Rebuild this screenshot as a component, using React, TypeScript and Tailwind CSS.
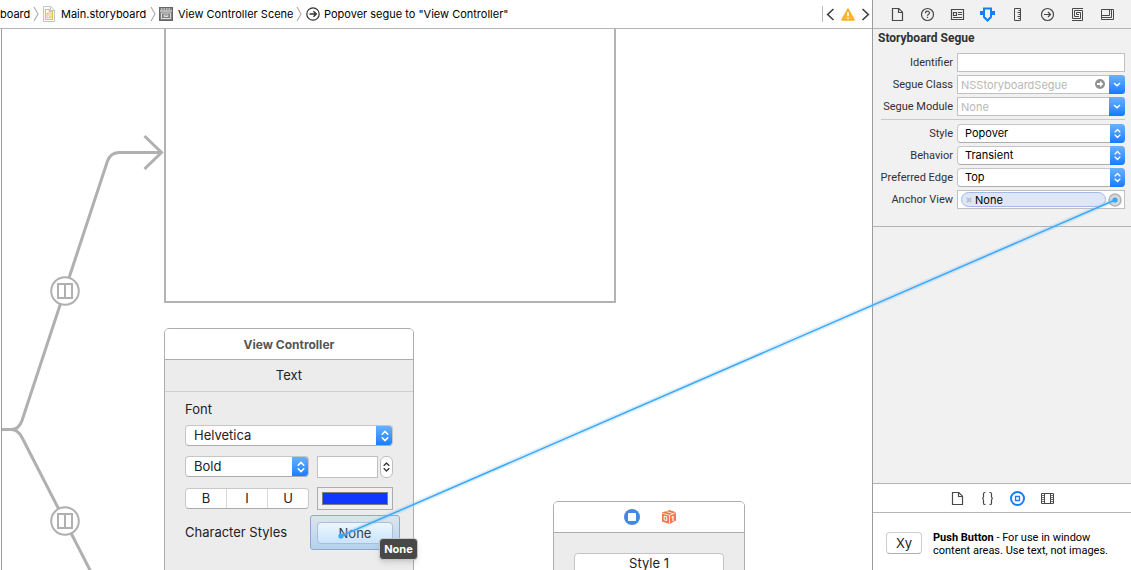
import React from "react";

function Chevrons({ className = "h-3 w-2" }: { className?: string }) {
  return (
    <svg viewBox="0 0 8 12" className={className} fill="none" stroke="currentColor" strokeWidth="1.5" strokeLinecap="round" strokeLinejoin="round">
      <path d="M1.2 4.2 4 1.4l2.8 2.8M1.2 7.8 4 10.6l2.8-2.8" />
    </svg>
  );
}

function CrumbArrow() {
  return (
    <svg viewBox="0 0 6 16" className="h-4 w-[6px] shrink-0" fill="none" stroke="#b0b0b0" strokeWidth="1.2">
      <path d="M1 1l4 7-4 7" />
    </svg>
  );
}

function SegueIcon() {
  return (
    <svg viewBox="0 0 14 14" className="size-[14px] shrink-0" fill="none" stroke="#333" strokeWidth="1.2">
      <circle cx="7" cy="7" r="6.2" />
      <path d="M3.5 7h6.6M7.4 4.2 10.3 7 7.4 9.8" strokeWidth="1.4" />
    </svg>
  );
}

function JumpBar() {
  return (
    <nav aria-label="Jump bar" className="flex h-[29px] shrink-0 items-center border-b border-[#b4b4b4] bg-white text-[11px] whitespace-nowrap text-black">
      <a href="#project" className="w-[33px]">board</a>
      <CrumbArrow />
      <a href="#storyboard" className="ml-1 flex w-[107px] items-center gap-[6px]">
        <svg viewBox="0 0 12 16" className="h-4 w-3 shrink-0" fill="none">
          <path d="M.5.5h7.3l3.7 3.7v11.3H.5z" fill="#fff" stroke="#c4c4c4" />
          <path d="M7.5.8v3.7h3.7" stroke="#c4c4c4" />
          <path d="M2.500 3.500h3.800v2.200h3.200v7.800h-7z" stroke="#efbd56" strokeWidth="1.2" />
          <path d="M4 7.200h4v4.600H4zM4.200 7.400l3.600 4.200" stroke="#efbd56" />
        </svg>
        Main.storyboard
      </a>
      <CrumbArrow />
      <a href="#scene" className="ml-[3px] flex w-[137px] items-center gap-[5px]">
        <svg viewBox="0 0 14 14" className="size-[14px] shrink-0" fill="none">
          <rect x=".5" y=".5" width="13" height="13" fill="#808080" stroke="#666" />
          <path d="M1 4h12M2 2h1.500M4.500 2H6M7 2h1.500M9.500 2H11" stroke="#fff" strokeWidth=".9" />
          <path d="M2.500 6h9v5.500h-9zM5 8h4v1.500H5z" stroke="#e4e4e4" strokeWidth=".9" />
        </svg>
        View Controller Scene
      </a>
      <CrumbArrow />
      <a href="#segue" className="ml-1 flex items-center gap-1">
        <SegueIcon />
        Popover segue to "View Controller"
      </a>
      <div className="ml-auto flex items-center border-l border-[#b8b8b8] pl-[3px] text-[#444]">
        <button aria-label="Previous issue" className="flex h-4 w-3 items-center">
          <svg viewBox="0 0 9 13" className="h-[13px] w-[9px]" fill="none" stroke="currentColor" strokeWidth="1.7"><path d="M7.500 1 1.700 6.500 7.500 12" /></svg>
        </button>
        <button aria-label="Warnings" className="ml-[3px] flex items-center">
          <svg viewBox="0 0 14 13" className="h-[13px] w-[14px]">
            <path d="M7 1.200 13 12H1z" fill="#fdbb2d" stroke="#f9b124" strokeWidth="1.6" strokeLinejoin="round" />
            <path d="M7 4v4M7 9.400V11" stroke="#fff" strokeWidth="1.500" />
          </svg>
        </button>
        <button aria-label="Next issue" className="mr-[2px] ml-[6px] flex h-4 items-center">
          <svg viewBox="0 0 9 13" className="h-[13px] w-[9px]" fill="none" stroke="currentColor" strokeWidth="1.7"><path d="M1.500 1 7.300 6.500 1.500 12" /></svg>
        </button>
      </div>
    </nav>
  );
}

function SegueBadge({ y }: { y: number }) {
  return (
    <g>
      <circle cx="65" cy={y} r="13.8" fill="#fff" stroke="#b0b0b0" strokeWidth="2" />
      <path d={`M58 ${y - 7}h14v14H58zM65 ${y - 7}v14`} fill="none" stroke="#b0b0b0" strokeWidth="2" />
    </g>
  );
}

function Connections() {
  return (
    <svg className="absolute top-0 left-0 h-[541px] w-[164px]" viewBox="0 0 164 541" fill="none" stroke="#b0b0b0" strokeWidth="3">
      <path d="M1.500 0v541" stroke="#9a9a9a" strokeWidth="1" />
      <path d="M2 400.500h9q8 0 11-9L107.500 132q3-8 11-8.500H161M144.500 107l17 16.500L144.500 140" />
      <path d="M11 400.500q7 0 11 8L91 543" />
      <SegueBadge y={262} />
      <SegueBadge y={492} />
    </svg>
  );
}

function CanvasSelect({ label, value, className }: { label: string; value: string; className: string }) {
  return (
    <div className={"relative flex h-[21px] overflow-hidden rounded-[4px] border border-[#c6c6c6] border-b-[#adadad] bg-white " + className}>
      <select aria-label={label} className="w-full appearance-none pl-2 text-[13px] leading-[19px] outline-none">
        <option>{value}</option>
      </select>
      <span className="pointer-events-none absolute -top-px -right-px -bottom-px flex w-[17px] items-center justify-center bg-linear-to-b from-[#69b1fa] to-[#0d7bff] text-white">
        <Chevrons />
      </span>
    </div>
  );
}

function TextController() {
  return (
    <section className="absolute top-[299px] left-[164px] h-[270px] w-[250px] rounded-t-[5px] border border-[#adadad] bg-[#ececec] text-[13px] text-[#222]">
      <h2 className="flex h-[31px] items-center justify-center rounded-t-[4px] border-b border-[#adadad] bg-white pt-px text-[12px] font-bold text-[#555]">View Controller</h2>
      <div className="flex h-8 items-center justify-center border-b border-[#cfcfcf]">Text</div>
      <div className="flex flex-col px-5 pt-2">
        <div className="h-[25px] leading-[18px]">Font</div>
        <CanvasSelect label="Font" value="Helvetica" className="w-[208px]" />
        <div className="mt-[9px] flex h-[23px] items-center gap-2">
          <CanvasSelect label="Weight" value="Bold" className="w-[124px]" />
          <div className="flex gap-[2px]">
            <input aria-label="Size" className="h-[22px] w-[61px] border border-[#c0c0c0] bg-white px-1 outline-none" />
            <button aria-label="Change size" className="flex h-[22px] w-[13px] items-center justify-center rounded-[6px] border border-[#bdbdbd] bg-white text-[#333]">
              <Chevrons className="h-[14px] w-[7px]" />
            </button>
          </div>
        </div>
        <div className="mt-[9px] flex h-[23px] items-center gap-2">
          <div className="flex h-[21px] w-[124px] divide-x divide-[#d8d8d8] rounded-[4px] border border-[#c9c9c9] border-b-[#adadad] bg-white leading-[19px]">
            <button className="flex-1">B</button>
            <button className="flex-1">I</button>
            <button className="flex-1">U</button>
          </div>
          <button aria-label="Text color" className="h-[23px] w-[76px] border border-[#adadad] bg-[#f0f0f0] p-1">
            <span className="block h-[13px] border border-[#7d8080] bg-[#0f37ff]" />
          </button>
        </div>
        <div className="mt-[5px] flex h-[35px] items-center justify-between">
          <span className="pt-px">Character Styles</span>
          <div className="-mr-[7px] flex h-[35px] w-[90px] items-center justify-center rounded-[3px] border border-[#8fa9ce] bg-linear-to-b from-[#dce5ee] to-[#b4d2ec]">
            <button className="h-[22px] w-[76px] rounded-[4px] border border-[#a9bfd3] bg-linear-to-b from-[#eef6fd] to-[#c9e4fb] leading-5 text-[#30404f]">None</button>
          </div>
        </div>
      </div>
    </section>
  );
}

function StyleController() {
  return (
    <section className="absolute top-[472px] left-[553px] h-[110px] w-[192px] rounded-t-[5px] border border-[#adadad] bg-[#ececec]">
      <div className="flex h-[31px] items-center justify-center gap-[21px] rounded-t-[4px] border-b border-[#adadad] bg-white pl-0.5">
        <svg viewBox="0 0 16 16" className="size-4"><circle cx="8" cy="8" r="8" fill="#4389e0" /><rect x="4" y="4" width="8" height="8" rx=".8" fill="#fff" /></svg>
        <svg viewBox="0 0 16 16" className="size-4">
          <path d="M8.500 1 15 3.200v8.300L8.500 15 1 12.500V3.600z" fill="#f2774c" />
          <path d="M1.200 4.200 8.500 6.300 14.800 3.600M8.500 6.300V14.600M5.500 2.600 12 4.600" fill="none" stroke="#fff" strokeWidth=".8" />
          <path d="M3.200 7.200v3.600l2.600.8V7.900zM3.200 9.200" fill="none" stroke="#fff" strokeWidth="1" />
          <path d="m10.600 8.400 1.400-.9v4.700" fill="none" stroke="#fff" strokeWidth="1.200" />
        </svg>
      </div>
      <div className="flex px-5 pt-5">
        <button className="h-[21px] w-full rounded-[4px] border border-[#c4c4c4] bg-white text-[13px] leading-[19px] text-[#222]">Style 1</button>
      </div>
    </section>
  );
}

function Glyph({ children }: { children: React.ReactNode }) {
  return <svg viewBox="0 0 17 17" className="size-[17px]" fill="none" stroke="currentColor" strokeWidth="1.200">{children}</svg>;
}

const docIcon = <Glyph><path d="M3.500 2.500h6.300l3.700 3.700v8.300h-10zM9.500 2.500v4h4" /></Glyph>;

const inspectorTabs: { name: string; icon: React.ReactNode; active?: boolean }[] = [
  { name: "File", icon: docIcon },
  { name: "Quick Help", icon: <Glyph><circle cx="8.500" cy="8.500" r="6" /><path d="M6.500 7.200c0-2.700 4-2.500 4-.3 0 1.300-2 1.400-2 2.800M8.500 10.700v1.400" /></Glyph> },
  { name: "Identity", icon: <Glyph><path d="M2.500 3.500h12v10h-12zM4.500 6.500h3v3h-3zM9 6.500h4M9 8.500h4M4 11.500h9" /></Glyph> },
  {
    name: "Attributes",
    active: true,
    icon: (
      <Glyph>
        <path d="M4 1.500h9v10L8.500 16 4 11.500zM1 5h15v4H1z" fill="currentColor" stroke="none" />
        <path d="M6 3.500h5v6.800l-2.500 2.700L6 10.300z" fill="#f1f1f1" stroke="none" />
      </Glyph>
    ),
  },
  { name: "Size", icon: <Glyph><path d="M5.500 2.500h6v12h-6zM11.500 4.500h-2M11.500 6.500h-3M11.500 8.500h-2M11.500 10.500h-3M11.500 12.500h-2" strokeWidth="1" /></Glyph> },
  { name: "Connections", icon: <Glyph><circle cx="8.500" cy="8.500" r="6" /><path d="M5 8.500h6.500M9 6l2.500 2.500L9 11" /></Glyph> },
  { name: "Bindings", icon: <Glyph><path d="M14 2.500H3.500v10h8v-6h-4v2H10M3 14.500h10.500v-10h-8v6H10" strokeWidth="1" /></Glyph> },
  { name: "View Effects", icon: <Glyph><path d="M2.500 3.500h12v10h-12zM2.500 9.500h8v-6M2.500 11.500h10v-8" strokeWidth="1" /></Glyph> },
];

const libraryTabs: { name: string; icon: React.ReactNode; active?: boolean }[] = [
  { name: "File Templates", icon: docIcon },
  { name: "Code Snippets", icon: <Glyph><path d="M6.500 2.500h-.7q-1.300 0-1.300 1.300v3q0 1.700-1.500 1.700 1.500 0 1.500 1.700v3q0 1.300 1.300 1.300h.7M10.500 2.500h.7q1.300 0 1.300 1.300v3q0 1.700 1.500 1.700-1.500 0-1.500 1.700v3q0 1.300-1.300 1.300h-.7" /></Glyph> },
  { name: "Objects", active: true, icon: <Glyph><circle cx="8.500" cy="8.500" r="6.500" strokeWidth="2" /><path d="M6.500 6.500h4v4h-4z" strokeWidth="1.300" /></Glyph> },
  { name: "Media", icon: <Glyph><path d="M2.500 3.500h12v10h-12zM5.500 3.500v10M11.500 3.500v10" strokeWidth="1" /><path d="M4 5v8M13 5v8" strokeDasharray="1 1" strokeWidth="1.500" /></Glyph> },
];

function Tabs({ tabs, label }: { tabs: typeof inspectorTabs; label: string }) {
  return (
    <div aria-label={label} className="flex h-[29px] items-center justify-center">
      {tabs.map((t) => (
        <button key={t.name} aria-label={t.name} className={t.active ? "w-[30px] pl-[7px] text-[#177efb]" : "w-[30px] pl-[7px] text-[#484848]"}>
          {t.icon}
        </button>
      ))}
    </div>
  );
}

function Row({ id, label, children }: { id: string; label: string; children: React.ReactNode }) {
  return (
    <div className="flex items-center gap-1">
      <label htmlFor={id} className="w-20 shrink-0 pt-px text-right font-['Roboto','Liberation_Sans',sans-serif] whitespace-nowrap">{label}</label>
      <div className="relative flex h-[19px] min-w-0 flex-1">{children}</div>
    </div>
  );
}

function Combo({ id, placeholder, jump }: { id: string; placeholder: string; jump?: boolean }) {
  return (
    <>
      <input id={id} placeholder={placeholder} className="min-w-0 flex-1 border border-[#c0c0c0] bg-white px-[3px] pt-px text-[11px] text-black outline-none placeholder:text-[#b8b8b8]" />
      {jump && (
        <button type="button" aria-label="Go to class" className="absolute top-1 right-[20px]">
          <svg viewBox="0 0 10 10" className="size-[10px]"><circle cx="5" cy="5" r="5" fill="#929292" /><path d="M2 4h3V2l3.300 3L5 8V6H2z" fill="#fff" /></svg>
        </button>
      )}
      <button type="button" aria-label="Show choices" className="-ml-px flex w-4 items-center justify-center rounded-r-[3px] bg-linear-to-b from-[#69b1fa] to-[#0d7bff] text-white">
        <svg viewBox="0 0 8 5" className="h-[5px] w-2" fill="none" stroke="currentColor" strokeWidth="1.500"><path d="m1 1 3 2.800L7 1" /></svg>
      </button>
    </>
  );
}

function Popup({ id, value }: { id: string; value: string }) {
  return (
    <div className="flex flex-1 overflow-hidden rounded-[4px] border border-[#c6c6c6] border-b-[#adadad] bg-white">
      <select id={id} className="w-full appearance-none pb-px pl-[7px] text-[11px] leading-4 text-black outline-none">
        <option>{value}</option>
      </select>
      <span className="pointer-events-none absolute inset-y-0 right-0 flex w-[15px] items-center justify-center rounded-r-[4px] bg-linear-to-b from-[#69b1fa] to-[#0d7bff] text-white">
        <Chevrons className="h-[11px] w-[7px]" />
      </span>
    </div>
  );
}

function Inspector() {
  return (
    <aside className="flex w-[259px] shrink-0 flex-col border-l border-[#9c9c9c] bg-[#f1f1f1] text-[11px] text-[#303030]">
      <div className="h-[29px] border-b border-[#b4b4b4]"><Tabs tabs={inspectorTabs} label="Inspectors" /></div>
      <form className="flex flex-col gap-[3px] border-b border-[#b4b4b4] pr-[6px] pb-[17px]">
        <h2 className="mb-[3px] pl-[5px] font-['Roboto','Liberation_Sans',sans-serif] text-[12px] leading-[18px] font-bold">Storyboard Segue</h2>
        <Row id="identifier" label="Identifier">
          <input id="identifier" className="w-full border border-[#c0c0c0] bg-white px-1 outline-none" />
        </Row>
        <Row id="segue-class" label="Segue Class"><Combo id="segue-class" placeholder="NSStoryboardSegue" jump /></Row>
        <Row id="segue-module" label="Segue Module"><Combo id="segue-module" placeholder="None" /></Row>
        <hr className="mb-px ml-2 border-[#c8c8c8]" />
        <Row id="style" label="Style"><Popup id="style" value="Popover" /></Row>
        <Row id="behavior" label="Behavior"><Popup id="behavior" value="Transient" /></Row>
        <Row id="edge" label="Preferred Edge"><Popup id="edge" value="Top" /></Row>
        <Row id="anchor" label="Anchor View">
          <div className="flex w-full items-center justify-between border border-[#c0c0c0] bg-white pr-[2px] pl-[3px]">
            <button type="button" id="anchor" className="flex h-[15px] w-[145px] items-center gap-[3px] rounded-full border border-[#a3b9e8] bg-[#dfe6f8] pt-px pl-1 text-black">
              <svg viewBox="0 0 6 6" className="size-[6px]" stroke="#b5bfd2" strokeWidth="1.800"><path d="m.8.8 4.400 4.400M5.200.8.8 5.200" /></svg>
              None
            </button>
            <svg viewBox="0 0 14 14" className="size-[14px] shrink-0"><circle cx="7" cy="7" r="6" fill="#d9d9d9" stroke="#b2b2b2" strokeWidth="1.500" /></svg>
          </div>
        </Row>
      </form>
      <div className="mt-auto h-[30px] border-y border-[#b4b4b4] bg-white"><Tabs tabs={libraryTabs} label="Libraries" /></div>
      <div className="flex h-[57px] items-start gap-[11px] bg-white pl-[13px] text-black">
        <button className="mt-[19px] h-[22px] w-9 shrink-0 rounded-[4px] border border-[#cfcfcf] border-b-[#b0b0b0] bg-white text-[13px] leading-5 text-[#222]">Xy</button>
        <p className="mt-[18px] font-['Roboto','Liberation_Sans',sans-serif] leading-[13px] whitespace-nowrap">
          <b>Push Button</b> - For use in window<br />content areas. Use text, not images.
        </p>
      </div>
    </aside>
  );
}

export default function App() {
  return (
    <div className="relative flex h-screen overflow-hidden bg-white font-['Inter','Liberation_Sans',sans-serif]">
      <div className="flex min-w-0 flex-1 flex-col">
        <JumpBar />
        <main className="relative flex-1 overflow-hidden bg-white">
          <div className="absolute -top-[2px] left-[164px] h-[276px] w-[452px] border-2 border-[#b3b3b3]" />
          <Connections />
          <TextController />
          <StyleController />
        </main>
      </div>
      <Inspector />
      <svg className="pointer-events-none absolute inset-0 size-full" fill="none" strokeLinecap="round">
        <path d="M341 536 1115 200" stroke="#8fc4ee" strokeOpacity=".3" strokeWidth="5" />
        <path d="M341 536 1115 200" stroke="#36a9fb" strokeWidth="1.500" />
        <circle cx="341" cy="536" r="2.600" fill="#36a9fb" />
        <circle cx="1115" cy="200" r="2.600" fill="#36a9fb" />
      </svg>
      <div role="tooltip" className="absolute top-[538px] left-[379px] flex h-[22px] w-[39px] items-center justify-center rounded-[4px] border border-[#c8c8c8] bg-[#484848] text-[11px] font-bold text-white shadow-md">None</div>
    </div>
  );
}
